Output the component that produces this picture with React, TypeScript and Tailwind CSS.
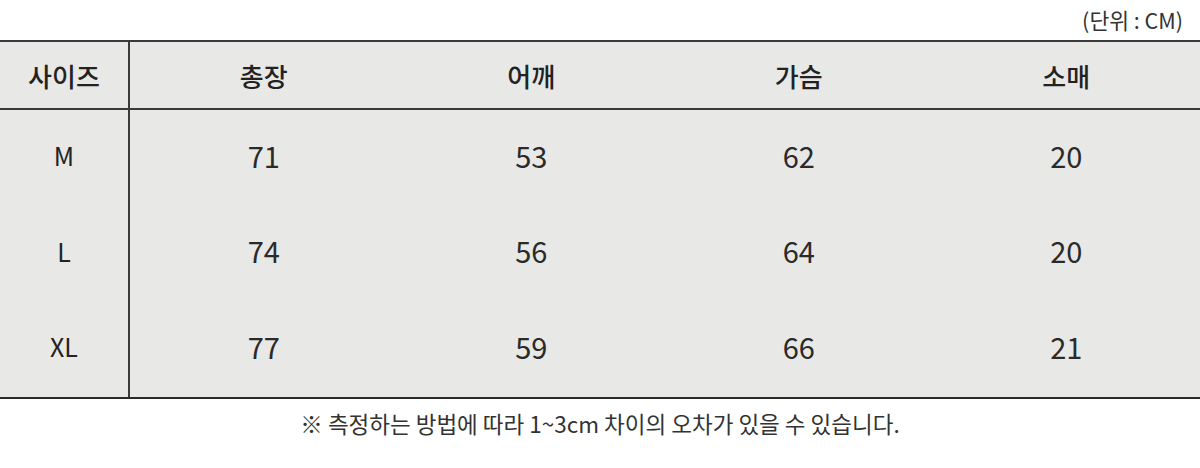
const headers = ["총장", "어깨", "가슴", "소매"];

const rows = [
  { size: "M", values: ["71", "53", "62", "20"] },
  { size: "L", values: ["74", "56", "64", "20"] },
  { size: "XL", values: ["77", "59", "66", "21"] },
];

export default function App() {
  return (
    <div
      className="w-[1200px] h-[468px] bg-white text-[#222] overflow-hidden"
      style={{ fontFamily: '"Noto Sans CJK KR", "Noto Sans", sans-serif' }}
    >
      {/* unit */}
      <div className="h-[40px] flex items-center justify-end pr-[17px] text-[21.5px] text-[#333]">
        (단위 : CM)
      </div>

      {/* table */}
      <div className="bg-[#e8e8e6] border-y-2 border-[#3a3a3a] border-b-[#2a2a2a]">
        <div className="grid grid-cols-[130px_1fr_1fr_1fr_1fr] h-[68px] border-b-2 border-[#3a3a3a]">
          <div className="flex items-center justify-center border-r-2 border-[#3a3a3a] text-[26px] font-medium">
            사이즈
          </div>
          {headers.map((h) => (
            <div key={h} className="flex items-center justify-center text-[26px] font-medium">
              {h}
            </div>
          ))}
        </div>
        {rows.map((r) => (
          <div key={r.size} className="grid grid-cols-[130px_1fr_1fr_1fr_1fr] h-[95.5px]">
            <div className="flex items-center justify-center pb-[4px] border-r-2 border-[#3a3a3a] text-[25px]">
              {r.size}
            </div>
            {r.values.map((v, i) => (
              <div key={i} className="flex items-center justify-center pb-[5px] text-[29px] text-[#2a2a2a]">
                {v}
              </div>
            ))}
          </div>
        ))}
      </div>

      {/* note */}
      <div className="h-[50px] flex items-center justify-center text-[22.5px] text-[#333]">
        ※ 측정하는 방법에 따라 1~3cm 차이의 오차가 있을 수 있습니다.
      </div>
    </div>
  );
}
